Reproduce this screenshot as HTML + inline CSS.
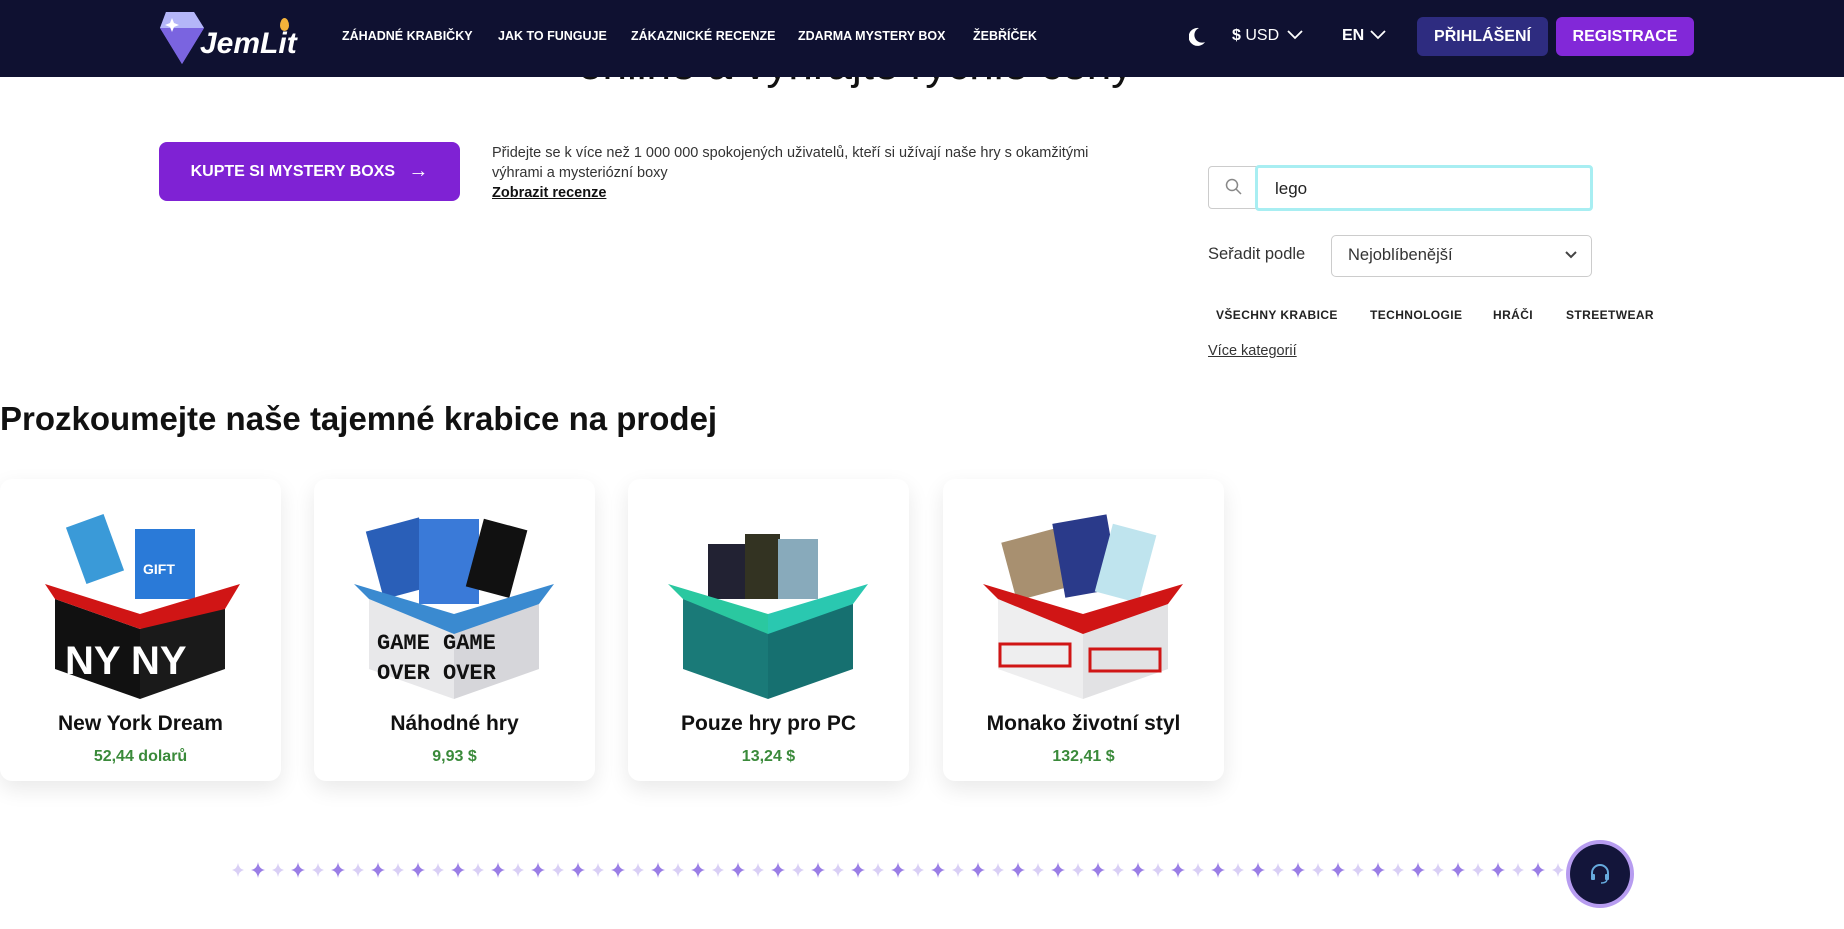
<!DOCTYPE html>
<html><head><meta charset="utf-8"><style>
*{margin:0;padding:0;box-sizing:border-box}
body{width:1844px;height:929px;overflow:hidden;background:#fff;font-family:"Liberation Sans",sans-serif;color:#111;position:relative}
.nav{position:absolute;left:0;top:0;width:1844px;height:77px;background:#0f1131}
.a{position:absolute}
.nl{position:absolute;top:29px;color:#fff;font-weight:bold;font-size:12.5px;letter-spacing:0}
.btn{position:absolute;border-radius:6px;color:#fff;font-weight:bold;display:flex;align-items:center;justify-content:center}
.card{position:absolute;top:479px;width:281px;height:302px;background:#fff;border-radius:12px;box-shadow:0 8px 22px rgba(0,0,0,.09)}
.card .t{position:absolute;top:233px;width:100%;text-align:center;font-size:21px;font-weight:bold;color:#111}
.card .p{position:absolute;top:269px;width:100%;text-align:center;font-size:16px;font-weight:bold;color:#3a8a3a}
.card svg{position:absolute;left:35px;top:20px}
.cat{position:absolute;top:308px;font-size:12px;font-weight:bold;color:#222;letter-spacing:.4px}
</style></head><body>
<div class="a" style="left:578px;top:40px;font-size:44px;color:#111;white-space:nowrap">online a vyhrajte rychlé ceny</div>
<div class="nav"></div>
<svg class="a" style="left:158px;top:10px" width="50" height="56" viewBox="0 0 50 56"><polygon points="8,2 36,2 46,18 24,54 2,18" fill="#8a7ef0"/><polygon points="8,2 36,2 46,18 2,18" fill="#b4b6f8"/><polygon points="2,18 46,18 24,54" fill="#7a64e0"/><path d="M14 8 l2 5 5 2 -5 2 -2 5 -2 -5 -5 -2 5 -2z" fill="#fff"/></svg>
<div class="a" style="left:200px;top:27px;color:#fff;font-weight:bold;font-style:italic;font-size:30px">JemLit</div>
<div class="a" style="left:280px;top:18px;width:9px;height:13px;background:#f3b23a;border-radius:50% 50% 50% 50%/60% 60% 40% 40%"></div>
<div class="nl" style="left:342px">ZÁHADNÉ KRABIČKY</div>
<div class="nl" style="left:498px">JAK TO FUNGUJE</div>
<div class="nl" style="left:631px">ZÁKAZNICKÉ RECENZE</div>
<div class="nl" style="left:798px">ZDARMA MYSTERY BOX</div>
<div class="nl" style="left:973px">ŽEBŘÍČEK</div>
<svg class="a" style="left:1189px;top:27px" width="17" height="19" viewBox="0 0 17 19"><path d="M10 1 A9 9 0 1 0 16 15 A7 7 0 0 1 10 1z" fill="#fff"/></svg>
<div class="a" style="left:1232px;top:27px;color:#fff;font-size:16px"><b>$</b> USD</div>
<svg class="a" style="left:1287px;top:30px" width="16" height="10"><path d="M1 1l7 7 7-7" stroke="#fff" stroke-width="1.8" fill="none"/></svg>
<div class="a" style="left:1342px;top:27px;color:#fff;font-size:16px;font-weight:bold">EN</div>
<svg class="a" style="left:1370px;top:30px" width="16" height="10"><path d="M1 1l7 7 7-7" stroke="#fff" stroke-width="1.8" fill="none"/></svg>
<div class="btn" style="left:1417px;top:17px;width:131px;height:39px;background:#2e2c80;font-size:16px">PŘIHLÁŠENÍ</div>
<div class="btn" style="left:1556px;top:17px;width:138px;height:39px;background:#8228d8;font-size:16px">REGISTRACE</div>

<div class="btn" style="left:159px;top:142px;width:301px;height:59px;background:#7f22d4;font-size:16px;border-radius:8px">KUPTE SI MYSTERY BOXS &nbsp;&nbsp;<span style="font-size:20px">→</span></div>
<div class="a" style="left:492px;top:143px;font-size:14.5px;line-height:20px;color:#333;width:650px">Přidejte se k více než 1 000 000 spokojených uživatelů, kteří si užívají naše hry s okamžitými výhrami a mysteriózní boxy<br><b style="text-decoration:underline;color:#111">Zobrazit recenze</b></div>

<div class="a" style="left:1208px;top:166px;width:384px;height:43px;border:1.5px solid #ccc;border-radius:4px"></div>
<svg class="a" style="left:1225px;top:178px" width="18" height="18"><circle cx="7" cy="7" r="5.5" stroke="#888" stroke-width="1.5" fill="none"/><path d="M11 11l5 5" stroke="#888" stroke-width="1.5"/></svg>
<div class="a" style="left:1255px;top:165px;width:338px;height:46px;border:3px solid #a8eef2;border-radius:4px;background:#fff;font-size:17px;padding:11px 0 0 17px;color:#222">lego</div>
<div class="a" style="left:1208px;top:245px;font-size:16.5px;color:#333">Seřadit podle</div>
<div class="a" style="left:1331px;top:235px;width:261px;height:42px;border:1.5px solid #ccc;border-radius:5px;font-size:16.5px;color:#333;padding:10px 0 0 16px">Nejoblíbenější</div>
<svg class="a" style="left:1565px;top:251px" width="12" height="8"><path d="M1 1l5 5 5-5" stroke="#444" stroke-width="2" fill="none"/></svg>
<div class="cat" style="left:1216px">VŠECHNY KRABICE</div>
<div class="cat" style="left:1370px">TECHNOLOGIE</div>
<div class="cat" style="left:1493px">HRÁČI</div>
<div class="cat" style="left:1566px">STREETWEAR</div>
<div class="a" style="left:1208px;top:343px;font-size:14.5px;color:#333;text-decoration:underline">Více kategorií</div>

<div class="a" style="left:0;top:400px;font-size:33px;font-weight:bold;color:#111">Prozkoumejte naše tajemné krabice na prodej</div>

<div class="card" style="left:0"><svg width="210" height="200" viewBox="0 0 210 200"><rect x="40" y="20" width="40" height="60" fill="#3a9ad8" transform="rotate(-20 60 50)"/><rect x="100" y="30" width="60" height="70" fill="#2a7ad8"/><text x="108" y="75" fill="#fff" font-size="14" font-weight="bold" font-family="Liberation Sans">GIFT</text><polygon points="20,100 105,130 105,200 20,170" fill="#111"/><polygon points="105,130 190,100 190,170 105,200" fill="#1a1a1a"/><polygon points="10,85 105,115 105,130 20,100" fill="#d01515"/><polygon points="105,115 205,85 190,110 105,130" fill="#d01515"/><text x="30" y="175" fill="#fff" font-size="40" font-weight="bold" font-family="Liberation Sans">NY NY</text></svg><div class="t">New York Dream</div><div class="p">52,44 dolarů</div></div>
<div class="card" style="left:314px"><svg width="210" height="200" viewBox="0 0 210 200"><rect x="25" y="25" width="55" height="70" fill="#2a5fb8" transform="rotate(-15 50 60)"/><rect x="70" y="20" width="60" height="85" fill="#3a7ad8"/><rect x="125" y="25" width="45" height="70" fill="#111" transform="rotate(15 150 60)"/><polygon points="20,100 105,130 105,200 20,170" fill="#e8e8ea"/><polygon points="105,130 190,100 190,170 105,200" fill="#d6d6da"/><polygon points="5,85 105,115 105,135 20,100" fill="#3a8ad0"/><polygon points="105,115 205,85 190,105 105,135" fill="#3a8ad0"/><text x="28" y="150" font-size="22" font-weight="bold" fill="#111" font-family="Liberation Mono">GAME GAME</text><text x="28" y="180" font-size="22" font-weight="bold" fill="#111" font-family="Liberation Mono">OVER OVER</text></svg><div class="t">Náhodné hry</div><div class="p">9,93 $</div></div>
<div class="card" style="left:628px"><svg width="210" height="200" viewBox="0 0 210 200"><rect x="45" y="45" width="40" height="55" fill="#223"/><rect x="82" y="35" width="35" height="65" fill="#332"/><rect x="115" y="40" width="40" height="60" fill="#8ab"/><polygon points="20,100 105,130 105,200 20,170" fill="#1a7a78"/><polygon points="105,130 190,100 190,170 105,200" fill="#167070"/><polygon points="5,85 105,115 105,135 20,100" fill="#2ac8a0"/><polygon points="105,115 205,85 190,105 105,135" fill="#2ac8b0"/></svg><div class="t">Pouze hry pro PC</div><div class="p">13,24 $</div></div>
<div class="card" style="left:943px"><svg width="210" height="200" viewBox="0 0 210 200"><rect x="30" y="35" width="60" height="60" fill="#a89070" transform="rotate(-15 60 65)"/><rect x="80" y="20" width="55" height="75" fill="#2a3a8a" transform="rotate(-10 105 55)"/><rect x="125" y="30" width="45" height="70" fill="#bfe4ee" transform="rotate(15 150 65)"/><polygon points="20,100 105,130 105,200 20,170" fill="#eeeeef"/><polygon points="105,130 190,100 190,170 105,200" fill="#e2e2e4"/><polygon points="5,85 105,115 105,135 20,100" fill="#d01515"/><polygon points="105,115 205,85 190,105 105,135" fill="#d01515"/><rect x="22" y="145" width="70" height="22" fill="none" stroke="#d01515" stroke-width="3"/><rect x="112" y="150" width="70" height="22" fill="none" stroke="#d01515" stroke-width="3"/></svg><div class="t">Monako životní styl</div><div class="p">132,41 $</div></div>

<svg class="a" style="left:228px;top:860px" width="1350" height="20">
<defs><pattern id="d" x="0" y="0" width="40" height="20" patternUnits="userSpaceOnUse"><path d="M10 3 Q11 9 16 10 Q11 11 10 17 Q9 11 4 10 Q9 9 10 3z" fill="#d9cff5"/><path d="M30 2 Q31 9 37 10 Q31 11 30 18 Q29 11 23 10 Q29 9 30 2z" fill="#9a7ee6"/></pattern></defs>
<rect width="1350" height="20" fill="url(#d)"/></svg>
<div class="a" style="left:1566px;top:840px;width:68px;height:68px;border-radius:50%;background:#b79cf0"></div>
<div class="a" style="left:1570px;top:844px;width:60px;height:60px;border-radius:50%;background:#13153a"></div>
<svg class="a" style="left:1589px;top:863px" width="22" height="22" viewBox="0 0 22 22"><path d="M3 13 V10 A8 8 0 0 1 19 10 V13" stroke="#6ad" stroke-width="2" fill="none"/><rect x="2" y="11" width="4" height="6" rx="1" fill="#6ad"/><rect x="16" y="11" width="4" height="6" rx="1" fill="#6ad"/><path d="M18 17 Q17 20 12 20" stroke="#6ad" stroke-width="1.5" fill="none"/></svg>
</body></html>
